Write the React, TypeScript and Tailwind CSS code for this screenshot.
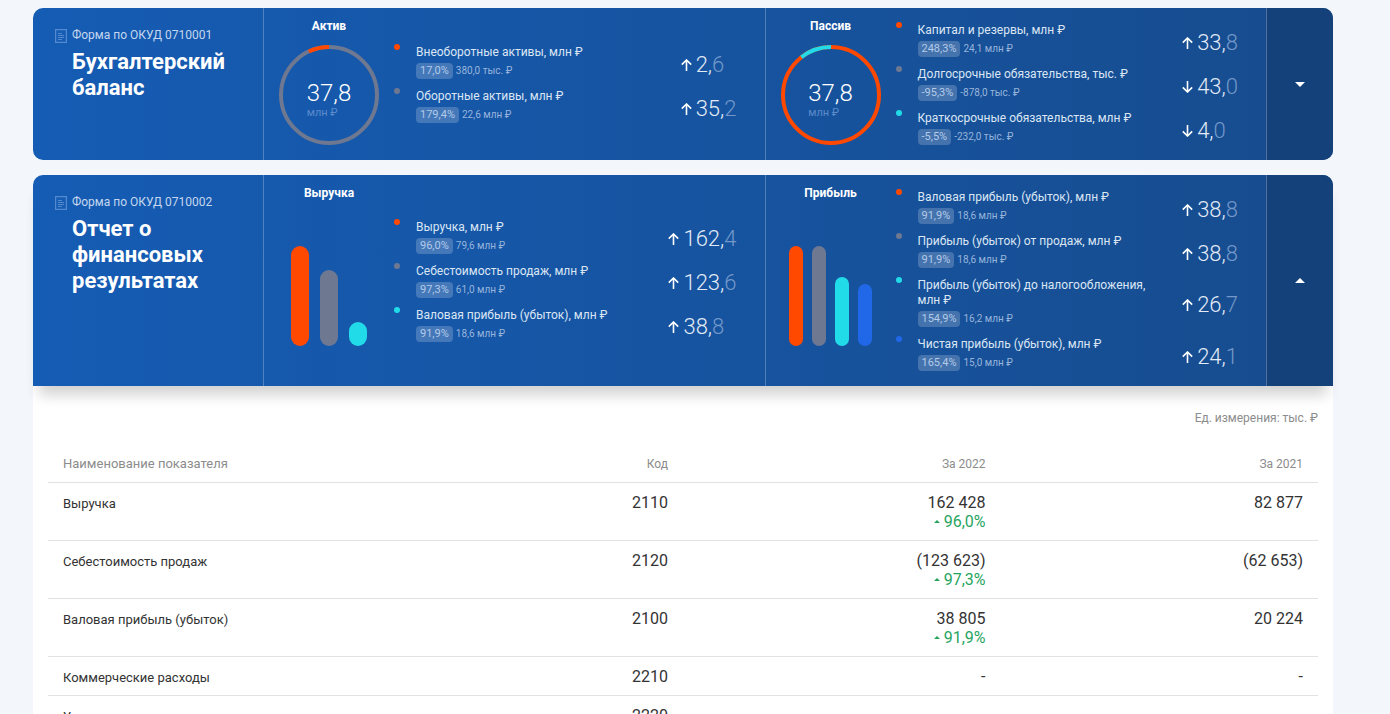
import { useState } from 'react';
import clsx from 'clsx';

interface Indicator {
  label: string;
  percent: string;
  change: string;
  direction: 'up' | 'down';
  whole: string;
  fraction: string;
}

interface Row {
  name: string;
  code: string;
  current: string;
  growth?: string;
  previous: string;
}

const DOT_COLORS = ['bg-[#ff4800]', 'bg-[#6e7890]', 'bg-[#22dbe8]', 'bg-[#2068e8]'];

const ASSETS: Indicator[] = [
  { label: 'Внеоборотные активы, млн ₽', percent: '17,0%', change: '380,0 тыс. ₽', direction: 'up', whole: '2', fraction: '6' },
  { label: 'Оборотные активы, млн ₽', percent: '179,4%', change: '22,6 млн ₽', direction: 'up', whole: '35', fraction: '2' },
];

const LIABILITIES: Indicator[] = [
  { label: 'Капитал и резервы, млн ₽', percent: '248,3%', change: '24,1 млн ₽', direction: 'up', whole: '33', fraction: '8' },
  { label: 'Долгосрочные обязательства, тыс. ₽', percent: '-95,3%', change: '-878,0 тыс. ₽', direction: 'down', whole: '43', fraction: '0' },
  { label: 'Краткосрочные обязательства, млн ₽', percent: '-5,5%', change: '-232,0 тыс. ₽', direction: 'down', whole: '4', fraction: '0' },
];

const REVENUE: Indicator[] = [
  { label: 'Выручка, млн ₽', percent: '96,0%', change: '79,6 млн ₽', direction: 'up', whole: '162', fraction: '4' },
  { label: 'Себестоимость продаж, млн ₽', percent: '97,3%', change: '61,0 млн ₽', direction: 'up', whole: '123', fraction: '6' },
  { label: 'Валовая прибыль (убыток), млн ₽', percent: '91,9%', change: '18,6 млн ₽', direction: 'up', whole: '38', fraction: '8' },
];

const PROFIT: Indicator[] = [
  { label: 'Валовая прибыль (убыток), млн ₽', percent: '91,9%', change: '18,6 млн ₽', direction: 'up', whole: '38', fraction: '8' },
  { label: 'Прибыль (убыток) от продаж, млн ₽', percent: '91,9%', change: '18,6 млн ₽', direction: 'up', whole: '38', fraction: '8' },
  { label: 'Прибыль (убыток) до налогообложения, млн ₽', percent: '154,9%', change: '16,2 млн ₽', direction: 'up', whole: '26', fraction: '7' },
  { label: 'Чистая прибыль (убыток), млн ₽', percent: '165,4%', change: '15,0 млн ₽', direction: 'up', whole: '24', fraction: '1' },
];

const ROWS: Row[] = [
  { name: 'Выручка', code: '2110', current: '162 428', growth: '96,0%', previous: '82 877' },
  { name: 'Себестоимость продаж', code: '2120', current: '(123 623)', growth: '97,3%', previous: '(62 653)' },
  { name: 'Валовая прибыль (убыток)', code: '2100', current: '38 805', growth: '91,9%', previous: '20 224' },
  { name: 'Коммерческие расходы', code: '2210', current: '-', previous: '-' },
  { name: 'Управленческие расходы', code: '2220', current: '-', previous: '-' },
];

function FormIcon() {
  return (
    <svg width="12" height="14" viewBox="0 0 12 14" fill="none" stroke="#5289cf" className="mt-px shrink-0">
      <rect x="0.6" y="0.6" width="10.8" height="12.8" strokeWidth="1.3" />
      <path d="M3 4.5h4M3 6.5h6M3 8.5h6M3 10.5h4" />
    </svg>
  );
}

function Arrow({ direction }: { direction: 'up' | 'down' }) {
  return (
    <svg
      width="11"
      height="12"
      viewBox="0 0 11 12"
      fill="none"
      stroke="white"
      strokeWidth="1.6"
      className={clsx('shrink-0', direction === 'down' && 'rotate-180')}
    >
      <path d="M5.5 12V1M0.8 5.6 5.5 1l4.7 4.6" />
    </svg>
  );
}

function Ring({ base, accent, share }: { base: string; accent: string; share: number }) {
  const length = 2 * Math.PI * 48;
  return (
    <div className="grid size-[100px] place-items-center">
      <svg viewBox="0 0 100 100" fill="none" strokeWidth="4" className="col-start-1 row-start-1 size-full">
        <circle cx="50" cy="50" r="48" stroke={base} />
        <circle
          cx="50"
          cy="50"
          r="48"
          stroke={accent}
          strokeDasharray={`${length * share} ${length}`}
          transform={`rotate(${-90 - share * 360} 50 50)`}
        />
      </svg>
      <div className="col-start-1 row-start-1 pt-2">
        <div className="text-2xl leading-7 font-light text-white">37,8</div>
        <div className="text-[11px] leading-3 text-[#5b8bcb]">млн ₽</div>
      </div>
    </div>
  );
}

function Bars({ heights, wide }: { heights: number[]; wide?: boolean }) {
  return (
    <div className={clsx('flex h-[110px] items-end', wide ? 'gap-[11px]' : 'gap-[9px]')}>
      {heights.map((height, i) => (
        <div
          key={i}
          className={clsx('rounded-full', DOT_COLORS[i], wide ? 'w-[18px]' : 'w-[14px]')}
          style={{ height }}
        />
      ))}
    </div>
  );
}

function Section({ title, items, children }: { title: string; items: Indicator[]; children: React.ReactNode }) {
  return (
    <section className="flex flex-1 border-l border-white/25">
      <div className="flex w-[130px] shrink-0 flex-col items-center pt-[10px] pb-[5px]">
        <h3 className="text-xs leading-4 font-bold text-white">{title}</h3>
        <div className="flex flex-1 items-center">{children}</div>
      </div>
      <ul className="grid flex-1 grid-cols-[22px_1fr_auto] content-center py-[10px] pr-7">
        {items.map((item, i) => (
          <li key={item.label} className="contents">
            <span className={clsx('mt-1 size-[6px] rounded-full', DOT_COLORS[i])} />
            <div className="pt-[5px] pr-8 pb-[5px]">
              <div className="text-xs leading-[15px] text-[#dbe6f4]">{item.label}</div>
              <div className="mt-[3px] flex items-center gap-[3px] text-[10px] leading-4 text-[#97b5dc]">
                <span className="rounded bg-white/20 px-1 text-[11px] leading-4 text-[#b3cae8]">{item.percent}</span>
                {item.change}
              </div>
            </div>
            <div className="flex items-center gap-1 pt-[5px]">
              <Arrow direction={item.direction} />
              <span className="text-[22px] leading-6 font-light text-[#e3ebf6]">
                {item.whole},<span className="text-[#7398c9]">{item.fraction}</span>
              </span>
            </div>
          </li>
        ))}
      </ul>
    </section>
  );
}

interface FormCardProps {
  code: string;
  title: string;
  open: boolean;
  onToggle: () => void;
  children: React.ReactNode;
}

function FormCard({ code, title, open, onToggle, children }: FormCardProps) {
  return (
    <article
      className={clsx(
        'flex shrink-0 overflow-hidden bg-linear-to-r from-[#155cb4] to-[#174c8e]',
        open ? 'rounded-t-[10px] shadow-[0_15px_14px_-6px_rgba(0,0,0,0.18)]' : 'rounded-[10px]'
      )}
    >
      <header className="flex w-[230px] shrink-0 gap-[5px] pt-5 pr-6 pl-[22px]">
        <FormIcon />
        <div>
          <p className="text-xs leading-[14px] whitespace-nowrap text-[#c5d7ee]">Форма по ОКУД {code}</p>
          <h2 className="mt-[7px] text-[22px] leading-[26px] font-bold text-white">{title}</h2>
        </div>
      </header>
      {children}
      <button
        type="button"
        aria-label={open ? 'Свернуть' : 'Развернуть'}
        aria-expanded={open}
        onClick={onToggle}
        className="flex w-[67px] shrink-0 items-center justify-center border-l border-white/25 bg-[#15417b]"
      >
        <svg width="10" height="5" viewBox="0 0 10 5" fill="white" className={clsx(open && 'rotate-180')}>
          <path d="M0 0h10L5 5z" />
        </svg>
      </button>
    </article>
  );
}

function ReportTable() {
  return (
    <div className="px-[15px] pt-[23px]">
      <p className="text-right text-xs leading-[18px] text-[#8c8c8c]">Ед. измерения: тыс. ₽</p>
      <table className="mt-[17px] w-full table-fixed border-collapse text-right">
        <thead>
          <tr className="border-b border-[#e2e2e2] text-xs leading-[18px] text-[#8c8c8c]">
            <th className="px-[15px] pt-[11px] pb-[9px] text-left text-[13px] leading-[18px] font-normal">
              Наименование показателя
            </th>
            <th className="px-[15px] pt-[11px] pb-[9px] font-normal">Код</th>
            <th className="px-[15px] pt-[11px] pb-[9px] font-normal">За 2022</th>
            <th className="px-[15px] pt-[11px] pb-[9px] font-normal">За 2021</th>
          </tr>
        </thead>
        <tbody>
          {ROWS.map((row) => (
            <tr key={row.code} className="border-b border-[#e2e2e2] align-top text-base leading-[18px] text-[#333]">
              <td className="px-[15px] pt-3 pb-2 text-left text-[13px] leading-[18px]">{row.name}</td>
              <td className="px-[15px] pt-[11px] pb-[9px]">{row.code}</td>
              <td className="px-[15px] pt-[11px] pb-[9px]">
                {row.current}
                {row.growth && (
                  <div className="flex items-center justify-end gap-1 leading-[19px] text-[#27a55f]">
                    <svg width="6" height="3" viewBox="0 0 6 3" fill="currentColor">
                      <path d="M0 3h6L3 0z" />
                    </svg>
                    {row.growth}
                  </div>
                )}
              </td>
              <td className="px-[15px] pt-[11px] pb-[9px]">{row.previous}</td>
            </tr>
          ))}
        </tbody>
      </table>
    </div>
  );
}

export default function App() {
  const [openForm, setOpenForm] = useState('0710002');

  function toggle(code: string) {
    setOpenForm(openForm === code ? '' : code);
  }

  return (
    <main className="flex h-screen flex-col gap-[15px] overflow-hidden bg-[#f3f6fb] pt-2 pr-[57px] pl-[33px] font-[Roboto,'Noto_Sans',sans-serif]">
      <FormCard
        code="0710001"
        title="Бухгалтерский баланс"
        open={openForm === '0710001'}
        onToggle={() => toggle('0710001')}
      >
        <Section title="Актив" items={ASSETS}>
          <Ring base="#6e7890" accent="#ff4800" share={0.069} />
        </Section>
        <Section title="Пассив" items={LIABILITIES}>
          <Ring base="#ff4800" accent="#22dbe8" share={0.106} />
        </Section>
      </FormCard>

      <div className="flex-1 bg-linear-to-b from-transparent from-[12px] to-white to-[12px]">
        <FormCard
          code="0710002"
          title="Отчет о финансовых результатах"
          open={openForm === '0710002'}
          onToggle={() => toggle('0710002')}
        >
          <Section title="Выручка" items={REVENUE}>
            <Bars heights={[100, 76, 24]} wide />
          </Section>
          <Section title="Прибыль" items={PROFIT}>
            <Bars heights={[100, 100, 69, 62]} />
          </Section>
        </FormCard>
        {openForm === '0710002' && <ReportTable />}
      </div>
    </main>
  );
}
